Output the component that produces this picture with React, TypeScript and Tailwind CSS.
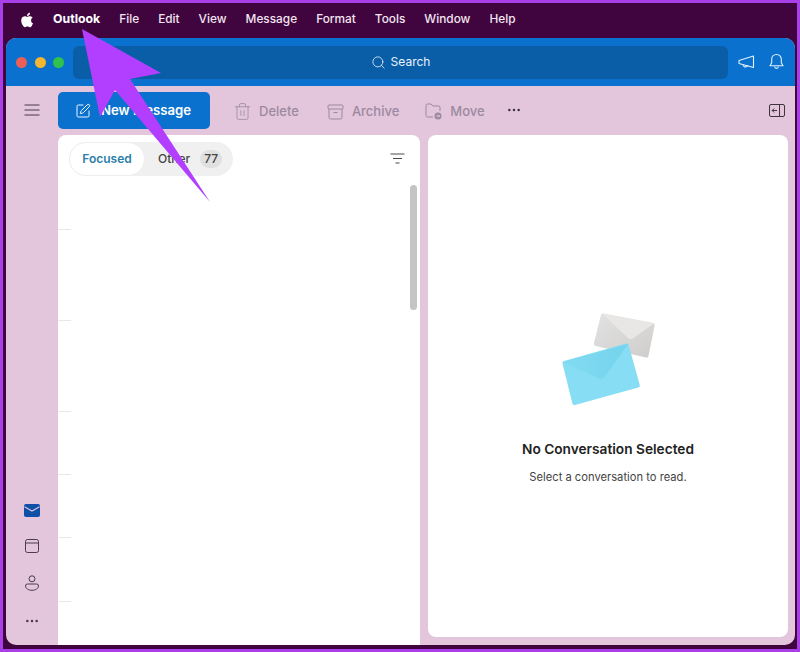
import React from 'react';
import { Search, SquarePen, Trash2, Ellipsis } from 'lucide-react';

const menuItems = ['File', 'Edit', 'View', 'Message', 'Format', 'Tools', 'Window', 'Help'];

const AppleLogo = () => (
  <svg width="17" height="18" viewBox="0 0 24 24" fill="#fff">
    <path d="M17.05 12.54c-.03-2.6 2.12-3.85 2.22-3.91-1.21-1.77-3.09-2.01-3.76-2.04-1.6-.16-3.12.94-3.93.94-.81 0-2.06-.92-3.39-.89-1.74.03-3.35 1.01-4.25 2.57-1.81 3.14-.46 7.8 1.3 10.35.86 1.25 1.89 2.65 3.24 2.6 1.3-.05 1.79-.84 3.36-.84 1.57 0 2.01.84 3.39.81 1.4-.02 2.28-1.27 3.14-2.53.99-1.45 1.4-2.85 1.42-2.92-.03-.01-2.72-1.04-2.74-4.14zM14.46 4.9c.72-.87 1.2-2.08 1.07-3.29-1.03.04-2.29.69-3.03 1.56-.66.77-1.24 2-1.09 3.18 1.15.09 2.33-.58 3.05-1.45z" />
  </svg>
);

const Megaphone = () => (
  <svg width="17" height="16" viewBox="0 0 17 16" fill="none" stroke="#e3f0fb" strokeWidth="1.1" strokeLinejoin="round">
    <path d="M1 6.5 15.5 2v11.5L1 9.5z" />
    <path d="M5 10.5c.2 1.800 1.500 2.600 3.100 2.300 1-.2 1.600-.8 1.800-1.500" />
  </svg>
);

const Bell = () => (
  <svg width="15" height="18" viewBox="0 0 15 18" fill="none" stroke="#e3f0fb" strokeWidth="1.1" strokeLinejoin="round">
    <path d="M7.500 1.500c-3 0-4.800 2.200-4.800 5v3.200L1 12.800h13l-1.700-3.100V6.500c0-2.800-1.800-5-4.800-5z" />
    <path d="M5.500 13.500c.2 1.200 1 1.900 2 1.900s1.800-.7 2-1.900" />
  </svg>
);

const Hamburger = () => (
  <svg width="16" height="12" viewBox="0 0 16 12" stroke="#4a3a4c" strokeWidth="1">
    <path d="M0.500 1h15M0.500 6h15M0.500 11h15" />
  </svg>
);

const ArchiveBox = () => (
  <svg width="17" height="16" viewBox="0 0 17 16" fill="none" stroke="#9b8a9f" strokeWidth="1">
    <rect x="1" y="1" width="15" height="4" rx="1" />
    <path d="M2 5v8.500A1.500 1.500 0 0 0 3.500 15h10a1.500 1.500 0 0 0 1.500-1.500V5" />
    <path d="M6.500 8.500h4" />
  </svg>
);

const MoveIcon = () => (
  <svg width="17" height="17" viewBox="0 0 17 17" fill="none" stroke="#9b8a9f" strokeWidth="1">
    <path d="M8 14H2.500A1.500 1.500 0 0 1 1 12.500v-10A1.500 1.500 0 0 1 2.500 1H6l2 2h5.500A1.500 1.500 0 0 1 15 4.500V8" />
    <circle cx="13" cy="13" r="3.500" fill="#9b8a9f" stroke="none" />
    <path d="M11.200 13h3.400m-1.300-1.300 1.300 1.300-1.300 1.300" stroke="#e3c5dc" />
  </svg>
);

const PaneToggle = () => (
  <svg width="16" height="13" viewBox="0 0 16 13" fill="none" stroke="#3e3440" strokeWidth="1">
    <rect x="0.500" y="0.500" width="15" height="12" rx="1.500" />
    <path d="M10.500 1v11" />
    <path d="M8 6.500H3.200m2-2-2 2 2 2" />
  </svg>
);

const FilterLines = () => (
  <svg width="15" height="11" viewBox="0 0 15 11" stroke="#4b4b4b" strokeWidth="1">
    <path d="M0.500 1h14M3 5.500h9M5.500 10h4" />
  </svg>
);

const MailSolid = () => (
  <svg width="16" height="13" viewBox="0 0 16 13">
    <rect width="16" height="13" rx="2" fill="#0f4fa8" />
    <path d="M0.500 2.800 8 7l7.500-4.200" fill="none" stroke="#e3c5dc" strokeWidth="1.100" />
  </svg>
);

const CalendarIcon = () => (
  <svg width="14" height="14" viewBox="0 0 14 14" fill="none" stroke="#4a3a4c" strokeWidth="1">
    <rect x="0.500" y="0.500" width="13" height="13" rx="2" />
    <path d="M0.500 4h13" />
  </svg>
);

const Person = () => (
  <svg width="14" height="16" viewBox="0 0 14 16" fill="none" stroke="#4a3a4c" strokeWidth="1">
    <circle cx="7" cy="3.800" r="3" />
    <path d="M2.500 9h9a2 2 0 0 1 2 2c0 2.500-3 4.300-6.500 4.300S.500 13.500.500 11a2 2 0 0 1 2-2z" />
  </svg>
);

// coordinates taken from the reference, origin at 560,310
const Envelopes = () => (
  <svg width="96" height="97" viewBox="0 0 96 97" className="block">
    <defs>
      <linearGradient id="grayBody" x1="0" y1="0" x2="1" y2="1">
        <stop offset="0" stopColor="#e2e2e2" />
        <stop offset="1" stopColor="#cfcdcc" />
      </linearGradient>
      <linearGradient id="blueFlap" x1="0" y1="0" x2="1" y2="0">
        <stop offset="0" stopColor="#82dbf2" />
        <stop offset="1" stopColor="#74d3ec" />
      </linearGradient>
    </defs>
    <path d="M41 5q.5-2 2.500-1.500l49.500 9.500q2 .4 1.600 2.400L88.500 46q-.4 2-2.400 1.600L35.500 36q-2-.4-1.600-2.400z" fill="url(#grayBody)" />
    <path d="M42 3.500 68 28q2 2 4.500 .8L94 13.500z" fill="#e8e7e6" />
    <path d="M2.500 53.500q-.5-2 1.500-2.500L66 33.500q2-.5 2.600 1.500L79.800 75q.5 2-1.500 2.600L15 95q-2 .5-2.600-1.500z" fill="#87ddf3" />
    <path d="M2.500 52 40 69c1.500.7 3 .4 4-.8L68 34z" fill="url(#blueFlap)" />
  </svg>
);

export default function App() {
  return (
    <div className="relative w-[800px] h-[652px] overflow-hidden border-[3px] border-[#a93fe8] bg-[#40053f] font-['Inter','Liberation_Sans',sans-serif] flex flex-col">
      {/* mac menu bar */}
      <div className="h-[35px] flex items-center pl-[16px] pb-[2px] text-[11.850px] text-[#f3e6f1] flex-none">
        <AppleLogo />
        <span className="ml-[17px] text-[12.300px] font-bold text-white">Outlook</span>
        <div className="flex gap-[19px] ml-[19px] font-medium">
          {menuItems.map(item => (
            <span key={item}>{item}</span>
          ))}
        </div>
      </div>

      {/* outlook window */}
      <div className="flex-1 min-h-0 ml-[3px] mr-[2px] mb-[4px] rounded-[10px] overflow-hidden bg-[#e3c5dc] flex flex-col">
        <div className="h-[48px] flex-none bg-[#0a72ce] flex items-center pl-[10px] pr-[11px]">
          <div className="flex gap-[7.700px] w-[57px]">
            <span className="w-[11px] h-[11px] rounded-full bg-[#ec5f57]" />
            <span className="w-[11px] h-[11px] rounded-full bg-[#f2b632]" />
            <span className="w-[11px] h-[11px] rounded-full bg-[#2fc24c]" />
          </div>
          <div className="w-[655px] h-[33px] rounded-[6px] bg-[#0a5ea8] flex items-center justify-center gap-[5px] text-[12px] text-[#eaf3fb]">
            <Search size={15} strokeWidth={1.300} />
            <span>Search</span>
          </div>
          <div className="flex items-center gap-[14px] ml-[10px]">
            <Megaphone />
            <Bell />
          </div>
        </div>

        <div className="flex-1 min-h-0 flex">
          {/* nav rail */}
          <div className="w-[52px] flex-none flex flex-col items-center pt-[18px] pb-[16px] pr-[1px] text-[#4a3a4c]">
            <Hamburger />
            <div className="mt-auto flex flex-col items-center">
              <MailSolid />
              <div className="mt-[22.500px]"><CalendarIcon /></div>
              <div className="mt-[22px]"><Person /></div>
              <Ellipsis size={16} strokeWidth={1.800} className="mt-[22px]" />
            </div>
          </div>

          <div className="flex-1 min-w-0 flex flex-col">
            {/* toolbar */}
            <div className="h-[49px] flex-none flex items-center text-[13px] text-[#9b8a9f] font-medium pb-[1px]">
              <div className="w-[152px] h-[37px] rounded-[5px] bg-[#0a72ce] flex items-center pl-[17px] pt-[1px] gap-[10px] text-white text-[13.200px] font-semibold">
                <SquarePen size={16} strokeWidth={1.400} />
                <span>New Message</span>
              </div>
              <div className="flex-1 flex items-center pt-[3px]">
                <Trash2 size={19} strokeWidth={1} className="ml-[23px]" />
                <span className="ml-[7px]">Delete</span>
                <span className="ml-[28px]"><ArchiveBox /></span>
                <span className="ml-[8px]">Archive</span>
                <span className="ml-[26px]"><MoveIcon /></span>
                <span className="ml-[8px]">Move</span>
                <Ellipsis size={16} strokeWidth={1.800} className="ml-[21px] -mt-[3px] text-[#3e3440]" />
                <span className="ml-auto mr-[10px] -mt-[3px]"><PaneToggle /></span>
              </div>
            </div>

            <div className="flex-1 min-h-0 flex gap-[8px]">
              {/* message list */}
              <div className="relative w-[362px] flex-none bg-white rounded-t-[8px] flex flex-col">
                <div className="h-[95px] flex-none border-b [border-image:linear-gradient(to_right,#e8e8e8_14px,transparent_14px)_1]">
                  <div className="flex items-center justify-between pl-[11px] pr-[15px] pt-[7px]">
                    <div className="h-[34px] w-[164px] rounded-full bg-[#f0f0f0] flex items-center text-[12px] font-medium">
                      <span className="w-[76px] h-[34px] rounded-full bg-white border border-[#eeeeee] flex items-center justify-center text-[#2a7ea8] font-semibold">Focused</span>
                      <span className="ml-[13px] text-[#444]">Other</span>
                      <span className="ml-[10px] w-[22px] h-[18px] rounded-full bg-[#e0e0e0] flex items-center justify-center text-[#444]">77</span>
                    </div>
                    <span className="-mt-[2px]"><FilterLines /></span>
                  </div>
                </div>
                <div className="h-[91px] flex-none border-b [border-image:linear-gradient(to_right,#e8e8e8_14px,transparent_14px)_1]" />
                <div className="h-[91px] flex-none border-b [border-image:linear-gradient(to_right,#e8e8e8_14px,transparent_14px)_1]" />
                <div className="h-[63px] flex-none border-b [border-image:linear-gradient(to_right,#e8e8e8_14px,transparent_14px)_1]" />
                <div className="h-[63px] flex-none border-b [border-image:linear-gradient(to_right,#e8e8e8_14px,transparent_14px)_1]" />
                <div className="h-[64px] flex-none border-b [border-image:linear-gradient(to_right,#e8e8e8_14px,transparent_14px)_1]" />
                <div className="absolute top-[50px] right-[3px] w-[7px] h-[125px] rounded-full bg-[#c4c4c4]" />
              </div>

              {/* reading pane */}
              <div className="w-[360px] flex-none bg-white rounded-[8px] mb-[8px] flex flex-col items-center pt-[175px]">
                <div><Envelopes /></div>
                <div className="mt-[32px] text-[13.700px] font-semibold text-[#222]">No Conversation Selected</div>
                <div className="mt-[9px] text-[11.200px] text-[#444]">Select a conversation to read.</div>
              </div>
            </div>
          </div>
        </div>
      </div>

      {/* annotation arrow, image coords offset by the 3px border */}
      <svg className="absolute -left-[3px] -top-[3px]" width="800" height="652" viewBox="0 0 800 652">
        <path d="M82 29 161 73 130 79 210 202 115 90 100 117z" fill="#b23fff" />
      </svg>
    </div>
  );
}
